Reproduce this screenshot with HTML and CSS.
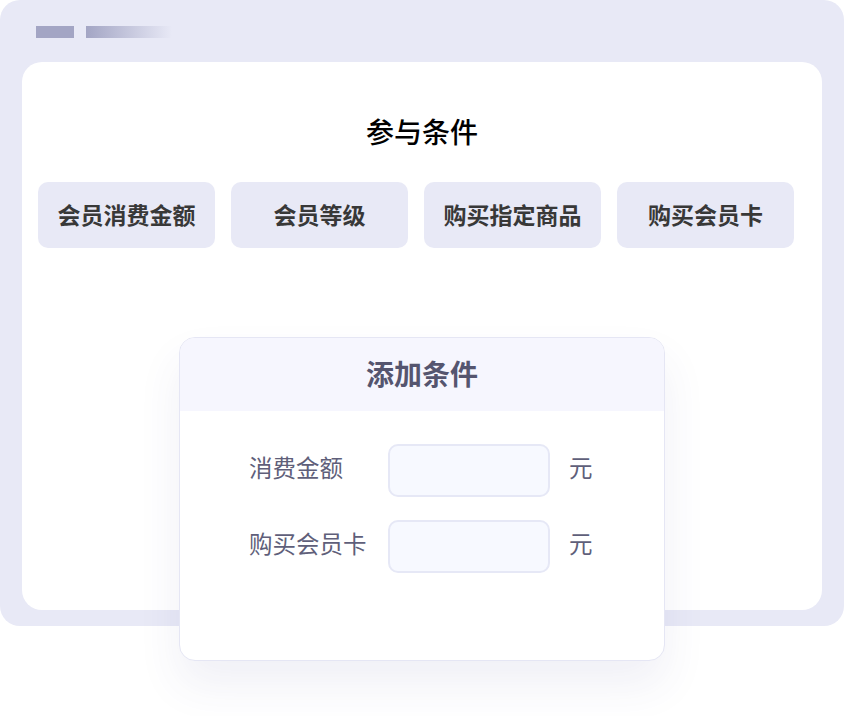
FILE: index.html
```html
<!DOCTYPE html>
<html lang="zh-CN">
<head>
  <meta charset="UTF-8">
  <meta name="viewport" content="width=device-width, initial-scale=1.0">
  <title>参与条件</title>
  <link rel="stylesheet" href="styles.css">
</head>
<body>
  <div class="frame">
    <div class="topbar">
      <span class="bar"></span>
      <span class="bar bar-fade"></span>
    </div>
    <div class="panel">
      <h2 class="panel-title">参与条件</h2>
      <div class="options">
        <div class="option">会员消费金额</div>
        <div class="option">会员等级</div>
        <div class="option">购买指定商品</div>
        <div class="option">购买会员卡</div>
      </div>
    </div>
  </div>

  <div class="dialog">
    <div class="dialog-head">添加条件</div>
    <div class="dialog-body">
      <div class="field">
        <label class="field-label">消费金额</label>
        <input class="field-input" type="text">
        <span class="field-unit">元</span>
      </div>
      <div class="field">
        <label class="field-label">购买会员卡</label>
        <input class="field-input" type="text">
        <span class="field-unit">元</span>
      </div>
    </div>
  </div>
</body>
</html>
```

FILE: styles.css
```css
body {
  margin: 0;
  background-color: #fff;
  font-family: "Noto Sans CJK SC", "Noto Sans", sans-serif;
  position: relative;
  width: 844px;
  height: 716px;
  overflow: hidden;
}
.frame {
  width: 844px;
  height: 626px;
  box-sizing: border-box;
  padding: 0 22px 16px;
  background-color: #e8e9f6;
  border-radius: 20px;
  display: flex;
  flex-direction: column;
}
.topbar {
  height: 62px;
  display: flex;
  gap: 12px;
  padding: 26px 0 0 14px;
  box-sizing: border-box;
}
.bar {
  width: 38px;
  height: 12px;
  background-color: #a3a5c4;
}
.bar-fade {
  width: 86px;
  background: linear-gradient(90deg, #a3a5c4, rgba(163, 165, 196, 0));
}
.panel {
  flex: 1;
  background-color: #fff;
  border-radius: 20px;
  padding: 0 16px;
}
.panel-title {
  margin: 0;
  height: 120px;
  line-height: 138px;
  text-align: center;
  font-size: 28px;
  font-weight: 500;
  color: #000;
}
.options {
  display: flex;
  gap: 16px;
}
.option {
  width: 177px;
  height: 66px;
  line-height: 64px;
  text-align: center;
  background-color: #e8e9f6;
  border-radius: 10px;
  font-size: 23px;
  font-weight: 700;
  color: #383838;
}
.dialog {
  position: absolute;
  left: 179px;
  top: 337px;
  width: 486px;
  height: 324px;
  box-sizing: border-box;
  background-color: #fff;
  border: 1px solid #e5e6f4;
  border-radius: 16px;
  overflow: hidden;
  box-shadow: 0 24px 44px rgba(70, 70, 140, 0.08);
}
.dialog-head {
  height: 73px;
  line-height: 71px;
  text-align: center;
  background-color: #f6f6fe;
  font-size: 28px;
  font-weight: 700;
  color: #55556f;
}
.dialog-body {
  padding: 33px 0 0 69px;
  display: flex;
  flex-direction: column;
  gap: 23px;
}
.field {
  display: flex;
  align-items: center;
}
.field-label {
  width: 139px;
  padding-bottom: 7px;
  font-size: 23.5px;
  color: #5f5f7a;
}
.field-input {
  width: 162px;
  height: 53px;
  box-sizing: border-box;
  border: 2px solid #e6e8f6;
  border-radius: 10px;
  background-color: #f7f9ff;
  outline: none;
}
.field-unit {
  margin-left: 19px;
  padding-bottom: 7px;
  font-size: 23.5px;
  color: #5f5f7a;
}
```
